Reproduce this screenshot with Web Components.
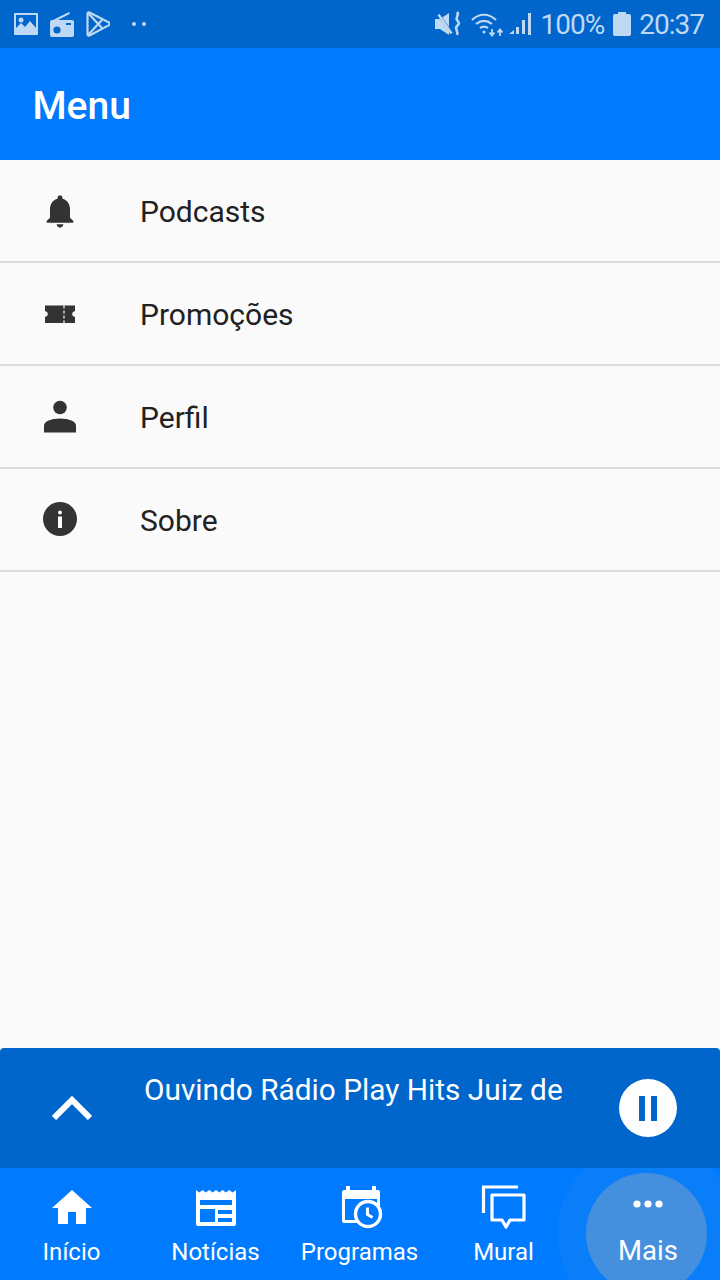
<!DOCTYPE html>
<html>
<head>
<meta charset="utf-8">
<style>
    html, body { margin: 0; padding: 0; }
    body { width: 720px; height: 1280px; overflow: hidden; font-family: Roboto, sans-serif; background: #fafafa; }
    #app { display: flex; flex-direction: column; height: 1280px; }
    #spacer { flex: 1; }
    svg { display: block; }
</style>
</head>
<body>
<div id="app">
    <status-bar></status-bar>
    <app-bar>Menu</app-bar>
    <menu-list>
        <menu-item label="Podcasts">
            <svg width="40" height="40" viewBox="0 0 24 24" fill="#333"><path d="M12 22c1.1 0 2-.9 2-2h-4c0 1.1.9 2 2 2zm6-6v-5c0-3.07-1.63-5.64-4.5-6.32V4c0-.83-.67-1.5-1.500-1.500s-1.500.67-1.500 1.500v.68C7.64 5.36 6 7.92 6 11v5l-2 2v1h16v-1l-2-2z"/></svg>
        </menu-item>
        <menu-item label="Promoções">
            <svg width="40" height="40" viewBox="0 0 40 40"><path fill="#333" d="M5 11.500h30V17.300a2.700 2.700 0 0 0 0 5.400V29H5V22.700a2.700 2.700 0 0 0 0-5.400z"/><path d="M24 11.500V29" stroke="#fafafa" stroke-width="1.200" stroke-dasharray="3 2"/></svg>
        </menu-item>
        <menu-item label="Perfil">
            <svg width="40" height="40" viewBox="0 0 40 40" fill="#333"><circle cx="20" cy="10.500" r="6.800"/><path d="M4 35.500v-7c0-4 7-7 16-7s16 3 16 7v7z"/></svg>
        </menu-item>
        <menu-item label="Sobre">
            <svg width="40" height="40" viewBox="0 0 40 40"><circle cx="20" cy="19" r="17" fill="#333"/><rect x="18" y="16.500" width="4" height="11.500" fill="#fafafa"/><rect x="18" y="10.500" width="4" height="4" rx="2" fill="#fafafa"/></svg>
        </menu-item>
    </menu-list>
    <div id="spacer"></div>
    <player-bar>Ouvindo Rádio Play Hits Juiz de</player-bar>
    <tab-bar>
        <tab-item label="Início">
            <svg width="48" height="48" viewBox="0 0 24 24" fill="#fff"><path d="M10 20v-6h4v6h5v-8h3L12 3 2 12h3v8z"/></svg>
        </tab-item>
        <tab-item label="Notícias">
            <svg width="48" height="48" viewBox="-4 -6 48 48" fill="#fff"><path fill-rule="evenodd" d="M0 0l3.300 2.500L6.600 0l3.300 2.500L13.300 0l3.300 2.500L20 0l3.300 2.500L26.600 0l3.300 2.500L33.300 0l3.300 2.500L40 0v34a2 2 0 0 1-2 2H2a2 2 0 0 1-2-2zM4 10v5h32v-5zM4 19v13h15V19zM22 20v4h14v-4zM22 28v4h14v-4z"/></svg>
        </tab-item>
        <tab-item label="Programas">
            <svg width="48" height="48" viewBox="0 0 48 48"><path fill="#fff" d="M10 2h4v4h22V2h4v4h2a2 2 0 0 1 2 2v18h-3V15H9v21h12v3H8a2 2 0 0 1-2-2V8a2 2 0 0 1 2-2h2z"/><circle cx="32" cy="30" r="12.500" fill="#007bff" stroke="#fff" stroke-width="3.400"/><path d="M31.500 23.500v7l5 3" fill="none" stroke="#fff" stroke-width="3"/></svg>
        </tab-item>
        <tab-item label="Mural">
            <svg width="48" height="48" viewBox="0 0 48 48" fill="none" stroke="#fff" stroke-width="3.200"><path d="M38 3H3.500v26"/><path d="M12 11h32v25H30l-4 7-4-7H12z" stroke-linejoin="round"/></svg>
        </tab-item>
        <tab-item label="Mais" active>
            <svg width="48" height="48" viewBox="0 0 48 48" fill="#fff"><circle cx="13" cy="20" r="3.600"/><circle cx="24" cy="20" r="3.600"/><circle cx="35" cy="20" r="3.600"/></svg>
        </tab-item>
    </tab-bar>
</div>

<script>
const statusTemplate = document.createElement("template");
statusTemplate.innerHTML = `
    <style>
        :host {
            display: flex;
            align-items: center;
            justify-content: space-between;
            height: 48px;
            padding: 0 16px 0 14px;
            box-sizing: border-box;
            background: #0066cc;
            color: #bfd8f3;
            font: 400 28px Roboto, sans-serif;
            flex: none;
        }
        .group { display: flex; align-items: center; }
        svg { display: block; }
        .txt { letter-spacing: -1.000px; line-height: 48px; padding-top: 2px; }
    </style>
    <div class="group">
        <svg width="24" height="24" viewBox="0 0 24 24" style="margin-right:12px"><path fill="#bfd8f3" fill-rule="evenodd" d="M1 1h22a1 1 0 0 1 1 1v20a1 1 0 0 1-1 1H1a1 1 0 0 1-1-1V2a1 1 0 0 1 1-1zM2 3v13l5-5 4 4 5-6 6 7V3z"/><circle cx="7" cy="8" r="2.500" fill="#bfd8f3"/></svg>
        <svg width="24" height="26" viewBox="0 0 24 26" style="margin-right:12px"><path fill="#bfd8f3" fill-rule="evenodd" d="M3 9L19 1l1 1.800L8 9h14a2 2 0 0 1 2 2v13a2 2 0 0 1-2 2H2a2 2 0 0 1-2-2V11a2 2 0 0 1 2-2zM16 12v2h5v-2z"/><circle cx="7" cy="19" r="3.600" fill="#0066cc"/></svg>
        <svg width="24" height="26" viewBox="0 0 24 26" fill="none" stroke="#bfd8f3" stroke-width="2.200" stroke-linejoin="round" style="margin-right:24px"><path d="M1.500 2.500c0-1 1-1.500 2-1L23 11.500c1 .6 1 2 0 2.600L3.500 24.500c-1 .5-2 0-2-1z"/><path d="M2 2l14 15M2 24L16 9"/></svg>
        <svg width="14" height="6" viewBox="0 0 14 6" fill="#bfd8f3" style="margin-left:-2px"><circle cx="2" cy="3" r="2"/><circle cx="12" cy="3" r="2"/></svg>
    </div>
    <div class="group">
        <svg width="27" height="26" viewBox="0 0 27 26" style="margin-right:9px"><path fill="#bfd8f3" d="M0 8h5l9-6v22l-9-6H0z"/><path d="M1 0l18 25" stroke="#0066cc" stroke-width="2.600"/><path d="M3.500 3.500l13 19" stroke="#bfd8f3" stroke-width="2.400"/><path d="M22 1c3 3-2 5 0 8s3 3 0 6 2 5 0 9" fill="none" stroke="#bfd8f3" stroke-width="2.600"/></svg>
        <svg width="34" height="26" viewBox="0 0 34 26" fill="none" stroke="#bfd8f3" stroke-width="2.200" style="margin-right:3px"><path d="M1 9c7-7 17-7 24 0M5 13c5-4 11-4 16 0M9 17c3-2 5-2 8 0"/><circle cx="13" cy="21" r="1.500" fill="#bfd8f3" stroke="none"/><path d="M21 18v6M18.500 21.500l2.500 3 2.500-3M29 25v-6M26.500 21.500l2.500-3 2.500 3" stroke-width="1.800"/></svg>
        <svg width="26" height="26" viewBox="0 0 26 26" fill="#bfd8f3" style="margin-right:7px"><path d="M1 23l5-4v4zM8 23v-7h3v7zM14 23V9h3v14zM20 24V2h3v22z"/></svg>
        <span class="txt">100%</span>
        <svg width="18" height="24" viewBox="0 0 18 24" fill="#bfd8f3" style="margin:0 8px 0 9px"><path d="M5 0h8v2h3a2 2 0 0 1 2 2v18a2 2 0 0 1-2 2H2a2 2 0 0 1-2-2V4a2 2 0 0 1 2-2h3z"/></svg>
        <span class="txt">20:37</span>
    </div>
`;

class StatusBar extends HTMLElement {
    constructor() {
        super();
        this.attachShadow({mode: "open"}).appendChild(statusTemplate.content.cloneNode(true));
    }
}
customElements.define("status-bar", StatusBar);

const appBarTemplate = document.createElement("template");
appBarTemplate.innerHTML = `
    <style>
        :host {
            display: flex;
            align-items: center;
            height: 112px;
            box-sizing: border-box;
            padding: 3px 0 0 32.500px;
            background: #007bff;
            color: #fff;
            font: 500 39px Roboto, sans-serif;
            flex: none;
        }
    </style>
    <slot></slot>
`;

class AppBar extends HTMLElement {
    constructor() {
        super();
        this.attachShadow({mode: "open"}).appendChild(appBarTemplate.content.cloneNode(true));
    }
}
customElements.define("app-bar", AppBar);

const menuListTemplate = document.createElement("template");
menuListTemplate.innerHTML = `
    <style>
        :host { display: flex; flex-direction: column; flex: none; }
    </style>
    <slot></slot>
`;

class MenuList extends HTMLElement {
    constructor() {
        super();
        this.attachShadow({mode: "open"}).appendChild(menuListTemplate.content.cloneNode(true));
    }
}
customElements.define("menu-list", MenuList);

const menuItemTemplate = document.createElement("template");
menuItemTemplate.innerHTML = `
    <style>
        :host {
            display: flex;
            align-items: center;
            height: 103px;
            box-sizing: border-box;
            border-bottom: 2px solid #dcdcdc;
            padding-left: 40px;
            background: #fafafa;
            color: #212121;
            font: 400 30px Roboto, sans-serif;
        }
        #icon { width: 40px; height: 40px; margin-right: 60px; }
        #label { padding-top: 1px; }
    </style>
    <div id="icon"><slot></slot></div>
    <span id="label"></span>
`;

class MenuItem extends HTMLElement {
    constructor() {
        super();
        this.attachShadow({mode: "open"}).appendChild(menuItemTemplate.content.cloneNode(true));
        this.shadowRoot.getElementById("label").textContent = this.getAttribute("label");
    }
}
customElements.define("menu-item", MenuItem);

const playerTemplate = document.createElement("template");
playerTemplate.innerHTML = `
    <style>
        :host {
            display: flex;
            align-items: center;
            height: 120px;
            background: #0066cc;
            border-radius: 4px 4px 0 0;
            color: #fff;
            font: 400 29.800px Roboto, sans-serif;
            flex: none;
        }
        #chevron { width: 40px; height: 24px; margin-left: 52px; margin-right: 52px; flex: none; }
        #title { width: 425px; height: 120px; line-height: 84px; white-space: nowrap; overflow: hidden; flex: none; }
        #pause {
            width: 58px;
            height: 58px;
            border-radius: 50%;
            background: #fff;
            margin-left: 50px;
            display: flex;
            align-items: center;
            justify-content: center;
            flex: none;
        }
        svg { display: block; }
    </style>
    <svg id="chevron" viewBox="0 0 40 24" fill="none" stroke="#fff" stroke-width="6"><path d="M2 22L20 4l18 18"/></svg>
    <div id="title"><slot></slot></div>
    <div id="pause">
        <svg width="18" height="25" viewBox="0 0 18 25" fill="#0066cc"><rect width="6" height="25"/><rect x="12" width="6" height="25"/></svg>
    </div>
`;

class PlayerBar extends HTMLElement {
    constructor() {
        super();
        this.attachShadow({mode: "open"}).appendChild(playerTemplate.content.cloneNode(true));
    }
}
customElements.define("player-bar", PlayerBar);

const tabBarTemplate = document.createElement("template");
tabBarTemplate.innerHTML = `
    <style>
        :host {
            display: grid;
            grid-template-columns: repeat(5, 144px);
            height: 112px;
            background: #007bff;
            overflow: hidden;
            flex: none;
        }
    </style>
    <slot></slot>
`;

class TabBar extends HTMLElement {
    constructor() {
        super();
        this.attachShadow({mode: "open"}).appendChild(tabBarTemplate.content.cloneNode(true));
    }
}
customElements.define("tab-bar", TabBar);

const tabItemTemplate = document.createElement("template");
tabItemTemplate.innerHTML = `
    <style>
        :host {
            display: flex;
            flex-direction: column;
            align-items: center;
            position: relative;
            color: #fff;
            font: 400 24px Roboto, sans-serif;
            padding-top: 16px;
        }
        #icon { width: 48px; height: 48px; position: relative; }
        #label { line-height: 32px; margin: 4px 1px 0 0; white-space: nowrap; position: relative; }
        #ripple, #halo { display: none; position: absolute; border-radius: 50%; }
        #halo { width: 180px; height: 180px; left: -19px; top: -25px; background: #0a7ef8; }
        #ripple { width: 121px; height: 121px; left: 10px; top: 5px; background: #458fdf; }
        :host([active]) #ripple, :host([active]) #halo { display: block; }
        :host([active]) { font-size: 27.500px; }
        :host([active]) #label { margin: 3px 0 0 0; }
    </style>
    <div id="halo"></div>
    <div id="ripple"></div>
    <div id="icon"><slot></slot></div>
    <span id="label"></span>
`;

class TabItem extends HTMLElement {
    constructor() {
        super();
        this.attachShadow({mode: "open"}).appendChild(tabItemTemplate.content.cloneNode(true));
        this.shadowRoot.getElementById("label").textContent = this.getAttribute("label");
    }
}
customElements.define("tab-item", TabItem);
</script>
</body>
</html>
